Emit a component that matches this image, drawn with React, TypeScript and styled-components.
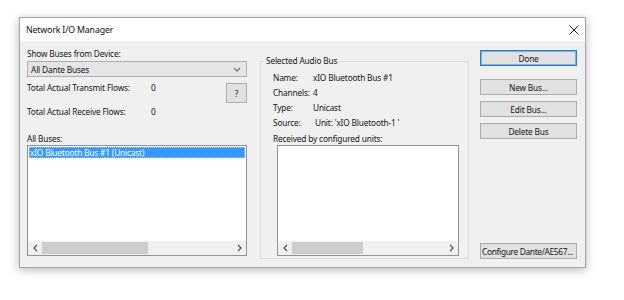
import React from "react";
import styled, { createGlobalStyle } from "styled-components";

const GlobalStyle = createGlobalStyle`
	html, body {
		margin: 0;
		padding: 0;
		background: #ffffff;
	}
	body {
		font-family: "Noto Sans", "Segoe UI", sans-serif;
		font-size: 8.3px;
		letter-spacing: -0.17px;
		color: #161616;
	}
`;

const Page = styled.div`
	width: 624px;
	height: 300px;
	box-sizing: border-box;
	padding: 17px 0 0 19px;
`;

const Window = styled.div`
	width: 567px;
	height: 251px;
	box-sizing: border-box;
	border: 1px solid #a3a3a3;
	box-shadow: 0 2px 9px rgba(0, 0, 0, 0.28);
	background: #f0f0f0;
	display: flex;
	flex-direction: column;
`;

const TitleBar = styled.div`
	height: 23px;
	flex: none;
	background: #ffffff;
	display: flex;
	align-items: center;
	justify-content: space-between;
	padding: 0 6px;
	font-size: 8.8px;
	color: #111;
`;

const Body = styled.div`
	flex: 1;
	display: flex;
	align-items: flex-start;
	padding: 7px 8px 0 7px;
`;

const LeftCol = styled.div`
	width: 220px;
	flex: none;
	display: flex;
	flex-direction: column;
`;

const Label = styled.div<{ $top?: number }>`
	height: 12px;
	line-height: 12px;
	margin-top: ${(p) => p.$top || 0}px;
	white-space: nowrap;
`;

const Select = styled.div`
	margin-top: 1px;
	height: 16px;
	box-sizing: border-box;
	border: 1px solid #adadad;
	background: #e5e5e5;
	display: flex;
	align-items: center;
	justify-content: space-between;
	padding: 0 5px 0 3px;
`;

const FlowsArea = styled.div`
	margin-top: 5px;
	display: flex;
	align-items: flex-start;
`;

const FlowsGrid = styled.div`
	display: grid;
	grid-template-columns: 124px auto;
	grid-auto-rows: 12px;
	row-gap: 12px;
	line-height: 12px;
`;

const Button = styled.button<{ $primary?: boolean }>`
	font: inherit;
	letter-spacing: inherit;
	color: #161616;
	height: 16px;
	padding: 0 3px;
	box-sizing: border-box;
	background: #e1e1e1;
	border: 1px solid ${(p) => (p.$primary ? "#2a7bd0" : "#adadad")};
	box-shadow: ${(p) => (p.$primary ? "inset 0 0 0 1px #7fb3e6" : "none")};
	white-space: nowrap;
	overflow: hidden;
	cursor: default;
`;

const HelpButton = styled(Button)`
	width: 21px;
	height: 20px;
	margin: 1px 0 0 auto;
`;

const ListBox = styled.div<{ $indent?: number }>`
	height: 111px;
	margin-left: ${(p) => p.$indent || 0}px;
	box-sizing: border-box;
	border: 1px solid #8f9399;
	background: #ffffff;
	display: flex;
	flex-direction: column;
`;

const Items = styled.div`
	flex: 1;
	padding: 1px;
`;

const Item = styled.div<{ $selected?: boolean }>`
	height: 11px;
	line-height: 11px;
	padding: 0 1px;
	white-space: nowrap;
	background: ${(p) => (p.$selected ? "#3399ff" : "transparent")};
	color: ${(p) => (p.$selected ? "#ffffff" : "#161616")};
	outline: ${(p) => (p.$selected ? "1px dotted #9fc9f5" : "none")};
	outline-offset: -1px;
`;

const ScrollBar = styled.div`
	height: 14px;
	flex: none;
	display: flex;
	background: #f0f0f0;
`;

const Arrow = styled.div`
	width: 14px;
	flex: none;
	display: flex;
	align-items: center;
	justify-content: center;
`;

const Track = styled.div`
	flex: 1;
	display: flex;
	align-items: stretch;
	padding: 1px 0;
`;

const Thumb = styled.div<{ $width: number }>`
	width: ${(p) => p.$width}px;
	background: #cdcdcd;
`;

const Group = styled.fieldset`
	width: 209px;
	flex: none;
	box-sizing: border-box;
	min-width: 0;
	margin: 7px 0 0 13px;
	padding: 3px 9px 2px 12px;
	border: 1px solid #dcdcdc;
`;

const Legend = styled.legend`
	padding: 0 2px;
	margin-left: -9px;
	height: 12px;
	line-height: 12px;
`;

const InfoGrid = styled.div`
	display: grid;
	grid-template-columns: 40px 1fr;
	grid-auto-rows: 15px;
	align-items: center;
	white-space: nowrap;
`;

const Value = styled.span<{ $shift?: number }>`
	margin-left: ${(p) => p.$shift || 0}px;
`;

const RightCol = styled.div`
	width: 97px;
	height: 209px;
	flex: none;
	margin: 2px 0 0 11px;
	display: flex;
	flex-direction: column;
`;

const ActionButton = styled(Button)<{ $gap?: number }>`
	width: 97px;
	margin-top: ${(p) => p.$gap || 0}px;
`;

const BottomButton = styled(Button)`
	width: 97px;
	margin-top: auto;
	text-align: left;
	padding: 0 1px;
	letter-spacing: -0.3px;
`;

function Chevron({ dir }: { dir: "left" | "right" | "down" }) {
	const d =
		dir === "left" ? "M4 1 L1 4 L4 7" : dir === "right" ? "M1 1 L4 4 L1 7" : "M1 1 L4 4 L7 1";
	const w = dir === "down" ? 8 : 5;
	const h = dir === "down" ? 5 : 8;
	return (
		<svg width={w} height={h} viewBox={`0 0 ${w} ${h}`}>
			<path d={d} fill="none" stroke={dir === "down" ? "#777" : "#555"} strokeWidth="1.3" />
		</svg>
	);
}

function HScroll({ thumb }: { thumb: number }) {
	return (
		<ScrollBar>
			<Arrow>
				<Chevron dir="left" />
			</Arrow>
			<Track>
				<Thumb $width={thumb} />
			</Track>
			<Arrow>
				<Chevron dir="right" />
			</Arrow>
		</ScrollBar>
	);
}

export default function App() {
	return (
		<>
			<GlobalStyle />
			<Page>
				<Window>
					<TitleBar>
						<span>Network I/O Manager</span>
						<svg width="10" height="10" viewBox="0 0 10 10">
							<path d="M0.5 0.5 L9.5 9.5 M9.5 0.5 L0.5 9.5" stroke="#222" strokeWidth="1" />
						</svg>
					</TitleBar>

					<Body>
						<LeftCol>
							<Label>Show Buses from Device:</Label>
							<Select>
								<span>All Dante Buses</span>
								<Chevron dir="down" />
							</Select>

							<FlowsArea>
								<FlowsGrid>
									<span>Total Actual Transmit Flows:</span>
									<span>0</span>
									<span>Total Actual Receive Flows:</span>
									<span>0</span>
								</FlowsGrid>
								<HelpButton>?</HelpButton>
							</FlowsArea>

							<Label $top={15}>All Buses:</Label>
							<ListBox>
								<Items>
									<Item $selected>xIO Bluetooth Bus #1 (Unicast)</Item>
								</Items>
								<HScroll thumb={106} />
							</ListBox>
						</LeftCol>

						<Group>
							<Legend>Selected Audio Bus</Legend>
							<InfoGrid>
								<span>Name:</span>
								<Value>xIO Bluetooth Bus #1</Value>
								<span>Channels:</span>
								<Value>4</Value>
								<span>Type:</span>
								<Value>Unicast</Value>
								<span>Source:</span>
								<Value $shift={2}>Unit: 'xIO Bluetooth-1 '</Value>
							</InfoGrid>
							<Label $top={3}>Received by configured units:</Label>
							<ListBox $indent={4}>
								<Items />
								<HScroll thumb={71} />
							</ListBox>
						</Group>

						<RightCol>
							<ActionButton $primary>Done</ActionButton>
							<ActionButton $gap={13}>New Bus...</ActionButton>
							<ActionButton $gap={6}>Edit Bus...</ActionButton>
							<ActionButton $gap={6}>Delete Bus</ActionButton>
							<BottomButton>Configure Dante/AE567...</BottomButton>
						</RightCol>
					</Body>
				</Window>
			</Page>
		</>
	);
}
